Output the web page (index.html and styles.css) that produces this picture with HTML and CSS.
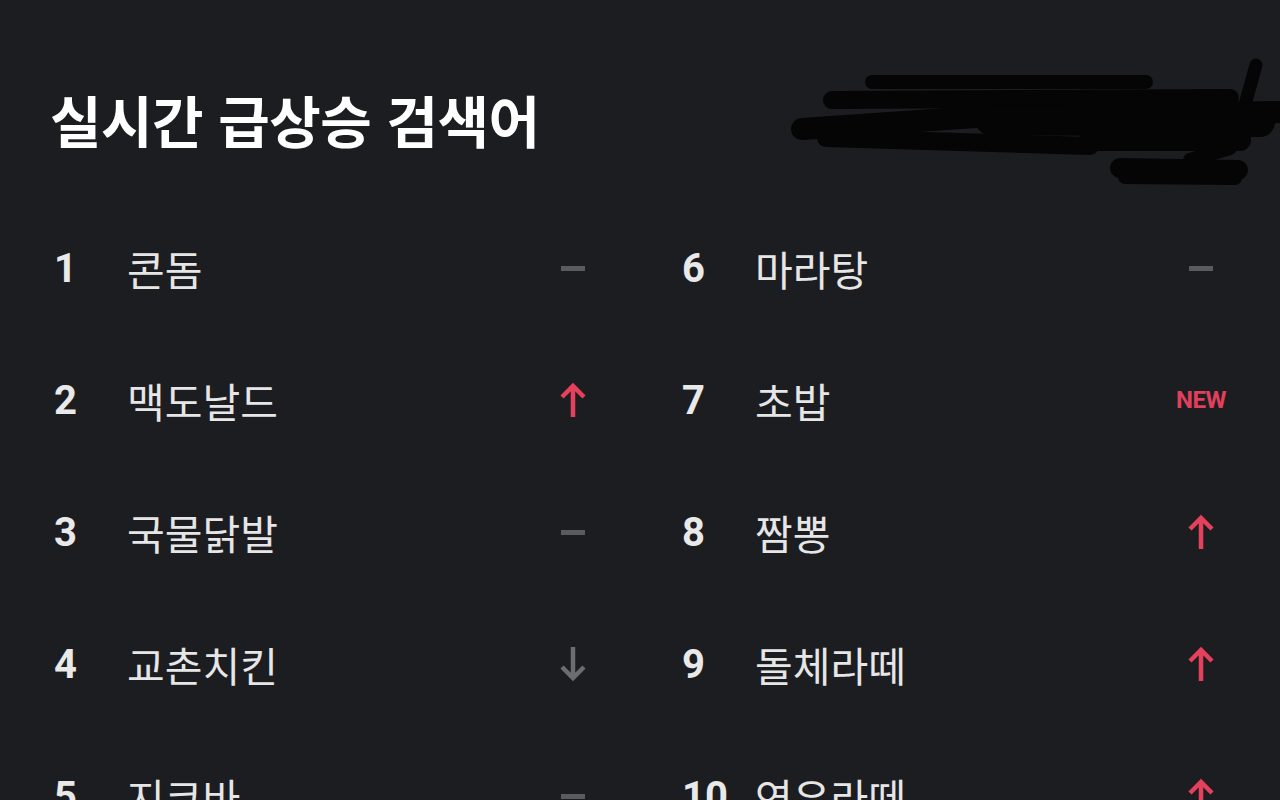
FILE: index.html
```html
<!DOCTYPE html>
<html lang="ko">
<head>
    <meta charset="UTF-8">
    <meta name="viewport" content="width=device-width, initial-scale=1.0">
    <title>실시간 급상승 검색어</title>
    <link rel="stylesheet" href="styles.css">
</head>
<body>
    <div class="page">
        <h1 class="title">실시간 급상승 검색어</h1>

        <svg class="redact" width="490" height="150" viewBox="0 0 490 150" aria-hidden="true">
            <g stroke="#050506" stroke-linecap="round" fill="none">
                <path d="M82 32 L356 32" stroke-width="14"/>
                <path d="M42 50 L440 48" stroke-width="18"/>
                <path d="M12 79 L200 66 L490 62" stroke-width="22"/>
                <path d="M36 88 L300 96" stroke-width="18"/>
                <path d="M200 70 L470 72" stroke-width="30"/>
                <path d="M300 90 L450 90" stroke-width="22"/>
                <path d="M330 118 L448 120" stroke-width="20"/>
                <path d="M335 127 L445 128" stroke-width="14"/>
                <path d="M400 110 L440 98" stroke-width="14"/>
                <path d="M466 15 L448 80" stroke-width="13"/>
            </g>
        </svg>

        <ol class="ranking">
            <li class="rank-item">
                <span class="rank-num">1</span>
                <span class="rank-word">콘돔</span>
                <span class="rank-trend"><svg class="ico-same" viewBox="0 0 24 5"><rect width="24" height="5"/></svg></span>
            </li>
            <li class="rank-item">
                <span class="rank-num">2</span>
                <span class="rank-word">맥도날드</span>
                <span class="rank-trend"><svg class="ico-up" viewBox="0 0 30 36"><path d="M15 35 V4 M4 15 L15 4 L26 15"/></svg></span>
            </li>
            <li class="rank-item">
                <span class="rank-num">3</span>
                <span class="rank-word">국물닭발</span>
                <span class="rank-trend"><svg class="ico-same" viewBox="0 0 24 5"><rect width="24" height="5"/></svg></span>
            </li>
            <li class="rank-item">
                <span class="rank-num">4</span>
                <span class="rank-word">교촌치킨</span>
                <span class="rank-trend"><svg class="ico-down" viewBox="0 0 30 36"><path d="M15 1 V32 M4 21 L15 32 L26 21"/></svg></span>
            </li>
            <li class="rank-item">
                <span class="rank-num">5</span>
                <span class="rank-word">지코바</span>
                <span class="rank-trend"><svg class="ico-same" viewBox="0 0 24 5"><rect width="24" height="5"/></svg></span>
            </li>
            <li class="rank-item">
                <span class="rank-num">6</span>
                <span class="rank-word">마라탕</span>
                <span class="rank-trend"><svg class="ico-same" viewBox="0 0 24 5"><rect width="24" height="5"/></svg></span>
            </li>
            <li class="rank-item">
                <span class="rank-num">7</span>
                <span class="rank-word">초밥</span>
                <span class="rank-trend"><span class="badge-new">NEW</span></span>
            </li>
            <li class="rank-item">
                <span class="rank-num">8</span>
                <span class="rank-word">짬뽕</span>
                <span class="rank-trend"><svg class="ico-up" viewBox="0 0 30 36"><path d="M15 35 V4 M4 15 L15 4 L26 15"/></svg></span>
            </li>
            <li class="rank-item">
                <span class="rank-num">9</span>
                <span class="rank-word">돌체라떼</span>
                <span class="rank-trend"><svg class="ico-up" viewBox="0 0 30 36"><path d="M15 35 V4 M4 15 L15 4 L26 15"/></svg></span>
            </li>
            <li class="rank-item">
                <span class="rank-num">10</span>
                <span class="rank-word">연유라떼</span>
                <span class="rank-trend"><svg class="ico-up" viewBox="0 0 30 36"><path d="M15 35 V4 M4 15 L15 4 L26 15"/></svg></span>
            </li>
        </ol>
    </div>
</body>
</html>
```

FILE: styles.css
```css
html, body {
    margin: 0;
    padding: 0;
    height: 100%;
    overflow: hidden;
}
body {
    background-color: #1c1d21;
    color: #ececec;
    font-family: "Noto Sans CJK KR", "Noto Sans", sans-serif;
}
.page {
    position: relative;
    padding: 89px 50px 0 50px;
}
.title {
    margin: 0;
    font-size: 56px;
    line-height: 60px;
    font-weight: 700;
    letter-spacing: -0.5px;
    color: #ffffff;
}
.redact {
    position: absolute;
    top: 50px;
    left: 790px;
}
.ranking {
    list-style: none;
    margin: 53px 0 0 0;
    padding: 0;
    display: grid;
    grid-template-columns: 551px 551px;
    grid-template-rows: repeat(5, 132px);
    grid-auto-flow: column;
    column-gap: 77px;
}
.rank-item {
    display: flex;
    align-items: center;
}
.rank-num {
    width: 77px;
    flex-shrink: 0;
    font-family: Roboto, "Liberation Sans", sans-serif;
    font-weight: 700;
    font-size: 40px;
    color: #e9e9e9;
    padding-left: 4px;
    box-sizing: border-box;
}
.rank-word {
    flex: 1;
    font-size: 41px;
    color: #e6e6e6;
}
.rank-trend {
    width: 56px;
    display: flex;
    justify-content: center;
    align-items: center;
}
.ico-same {
    width: 24px;
    height: 5px;
    fill: #5a5b5f;
}
.ico-up, .ico-down {
    width: 30px;
    height: 36px;
    fill: none;
    stroke-width: 4.5;
}
.ico-up {
    stroke: #e5405c;
}
.ico-down {
    stroke: #6c6d71;
}
.badge-new {
    font-family: Roboto, "Liberation Sans", sans-serif;
    font-weight: 700;
    font-size: 24px;
    letter-spacing: -0.5px;
    color: #e0405c;
}
```
